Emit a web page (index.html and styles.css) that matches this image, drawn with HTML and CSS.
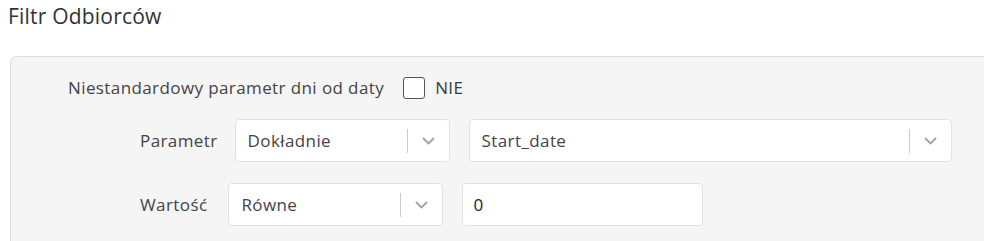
FILE: index.html
```html
<!DOCTYPE html>
<html lang="pl">
<head>
    <meta charset="UTF-8">
    <title>Filtr Odbiorców</title>
    <link rel="stylesheet" href="styles.css">
</head>
<body>
    <h2 class="section-title">Filtr Odbiorców</h2>

    <div class="filter-panel">
        <!-- Custom date param toggle -->
        <div class="row row-check">
            <span class="label">Niestandardowy parametr dni od daty</span>
            <span class="checkbox"></span>
            <span class="check-text">NIE</span>
        </div>

        <!-- Parametr -->
        <div class="row row-param">
            <span class="label">Parametr</span>
            <div class="select select-mode">
                <span class="select-value">Dokładnie</span>
                <span class="select-sep"></span>
                <svg class="chevron" viewBox="0 0 13 8" width="13" height="8"><path d="M1 1l5.5 5.5L12 1" fill="none" stroke="#a0a0a0" stroke-width="1.8"/></svg>
            </div>
            <div class="select select-field">
                <span class="select-value">Start_date</span>
                <span class="select-sep"></span>
                <svg class="chevron" viewBox="0 0 13 8" width="13" height="8"><path d="M1 1l5.5 5.5L12 1" fill="none" stroke="#a0a0a0" stroke-width="1.8"/></svg>
            </div>
        </div>

        <!-- Wartość -->
        <div class="row row-value">
            <span class="label">Wartość</span>
            <div class="select select-mode">
                <span class="select-value">Równe</span>
                <span class="select-sep"></span>
                <svg class="chevron" viewBox="0 0 13 8" width="13" height="8"><path d="M1 1l5.5 5.5L12 1" fill="none" stroke="#a0a0a0" stroke-width="1.8"/></svg>
            </div>
            <div class="text-input">0</div>
        </div>
    </div>
</body>
</html>
```

FILE: styles.css
```css
body {
    margin: 0;
    font-family: "Open Sans", "Noto Sans", sans-serif;
    color: #3a3a3a;
    background: #fff;
    overflow: hidden;
}

.section-title {
    margin: 0;
    padding: 3px 8px 0;
    font-size: 21px;
    font-weight: normal;
    line-height: 27px;
    letter-spacing: 0.2px;
    color: #333;
}

/* Grey filter box */
.filter-panel {
    margin: 26px 0 0 10px;
    padding: 19px 0 0 57px;
    background: #f5f5f5;
    border: 1px solid #dcdcdc;
    border-right: none;
    border-radius: 7px 0 0 0;
    height: 170px;
}

.row {
    display: flex;
    align-items: center;
}

.label {
    font-size: 17px;
    letter-spacing: 0.4px;
    color: #444;
}

.row-check .checkbox {
    width: 20px;
    height: 20px;
    margin-left: 19px;
    border: 1px solid #555;
    border-radius: 3px;
    background: #fff;
}

.row-check .check-text {
    margin-left: 10px;
    font-size: 17px;
    letter-spacing: 0.4px;
}

.row-param {
    margin-top: 20px;
    padding-left: 72px;
}

.row-value {
    margin-top: 21px;
    padding-left: 72px;
}

.row-param .label {
    margin-right: 17px;
}

.row-value .label {
    margin-right: 21px;
}

.select {
    display: flex;
    align-items: center;
    height: 41px;
    background: #fff;
    border: 1px solid #e2e2e2;
    border-radius: 4px;
}

.select-mode { width: 213px; }
.select-field { width: 481px; margin-left: 19px; }

.select-value {
    flex: 1;
    padding-left: 12px;
    font-size: 17px;
    letter-spacing: 0.4px;
    color: #444;
}

.select-sep {
    width: 1px;
    height: 24px;
    background: #ccc;
}

.chevron {
    margin: 0 14px;
}

.text-input {
    width: 229px;
    height: 41px;
    margin-left: 19px;
    padding-left: 10px;
    line-height: 41px;
    background: #fff;
    border: 1px solid #e2e2e2;
    border-radius: 4px;
    font-size: 17px;
    color: #222;
}
```
